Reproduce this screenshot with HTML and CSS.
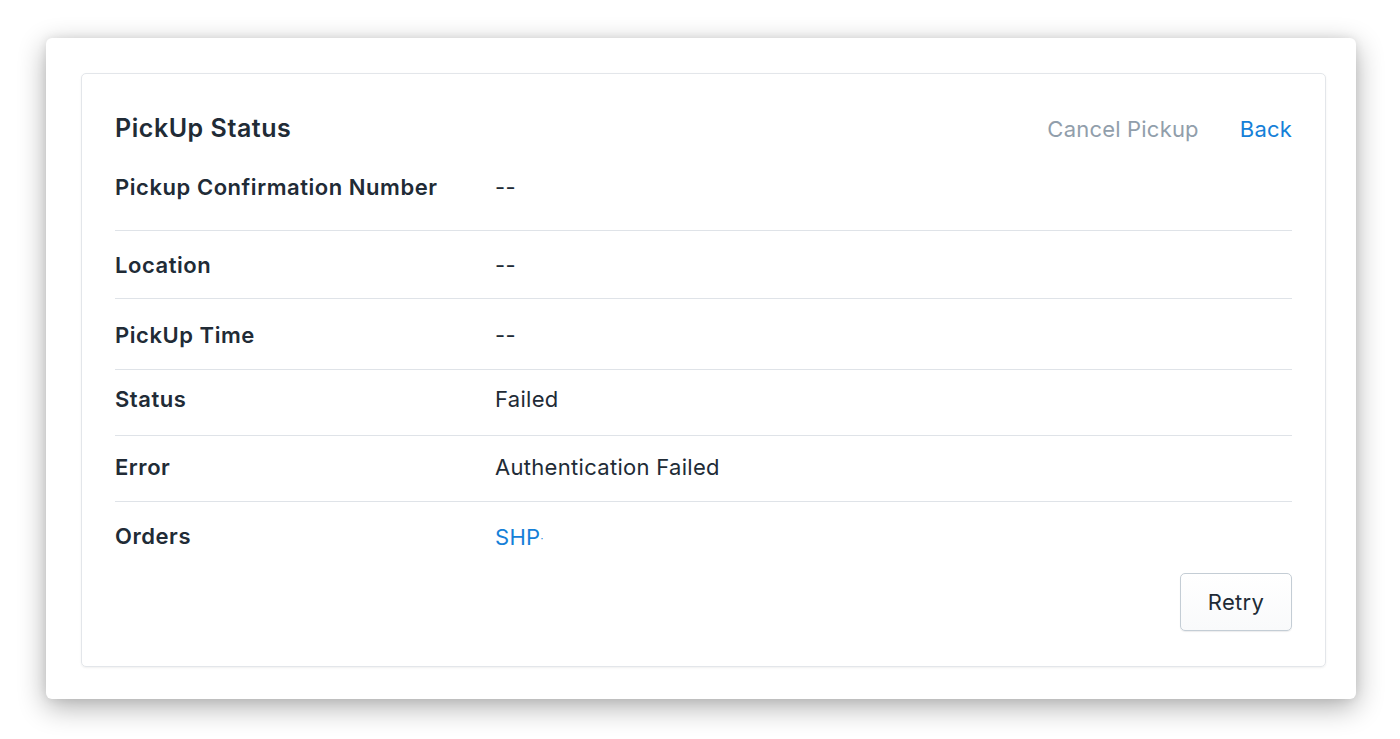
FILE: index.html
```html
<!DOCTYPE html>
<html>
<head>
<meta charset="utf-8">
<link rel="stylesheet" href="styles.css">
</head>
<body>
<div class="page">
  <div class="window">
    <div class="card">
      <div class="header">
        <h2 class="title">PickUp Status</h2>
        <div class="actions">
          <span class="link muted">Cancel Pickup</span>
          <span class="link">Back</span>
        </div>
      </div>
      <div class="rows">
        <div class="row r1"><div class="label">Pickup Confirmation Number</div><div class="value">--</div></div>
        <div class="row r2"><div class="label">Location</div><div class="value">--</div></div>
        <div class="row r3"><div class="label">PickUp Time</div><div class="value">--</div></div>
        <div class="row r4"><div class="label">Status</div><div class="value">Failed</div></div>
        <div class="row r5"><div class="label">Error</div><div class="value">Authentication Failed</div></div>
        <div class="row r6"><div class="label">Orders</div><div class="value"><span class="order">SHP<span class="dot">·</span></span></div></div>
      </div>
      <div class="footer">
        <button class="btn">Retry</button>
      </div>
    </div>
  </div>
</div>
</body>
</html>
```
FILE: styles.css
```css
* { box-sizing: border-box; }
html, body { margin: 0; padding: 0; background: #ffffff; }
body {
  font-family: Inter, "Noto Sans", "Liberation Sans", sans-serif;
  color: #212b36;
  width: 1400px;
  height: 739px;
  overflow: hidden;
}
.page {
  padding: 38px 44px 40px 46px;
}
.window {
  width: 1310px;
  height: 661px;
  background: #ffffff;
  border-radius: 6px;
  box-shadow: 0 8px 28px rgba(0, 0, 0, 0.32), 0 0 10px rgba(0, 0, 0, 0.08);
  padding: 35px 30px 33px 35px;
}
.card {
  border: 1px solid #e3e6ea;
  border-radius: 5px;
  height: 594px;
  padding: 33px 33px 33px 33px;
  box-shadow: 0 1px 2px rgba(63, 63, 68, 0.08);
}
.header {
  display: flex;
  justify-content: space-between;
  align-items: center;
  height: 42px;
}
.title {
  margin: 0;
  font-size: 25px;
  font-weight: 600;
  line-height: 42px;
  letter-spacing: 0.55px;
}
.actions {
  display: flex;
  gap: 41px;
  font-size: 22px;
  line-height: 42px;
  padding-top: 2px;
  letter-spacing: 0.2px;
}
.link { color: #1580d8; }
.link.muted { color: #919eab; }
.rows { display: flex; flex-direction: column; }
.row {
  display: flex;
  font-size: 22px;
  line-height: 28px;
}
.row + .row { border-top: 1px solid #dfe3e8; }
.label { width: 380px; font-weight: 600; letter-spacing: 0.55px; }
.value { font-weight: 400; letter-spacing: 0.3px; }
.r1 { padding: 24px 0 29px; }
.r2 { padding: 20px 0 19px; }
.r3 { padding: 22px 0 20px; }
.r4 { padding: 15px 0 22px; }
.r5 { padding: 17px 0 20px; }
.r6 { padding: 20px 0 0; }
.r6 .value { padding-top: 1px; }
.order { color: #1580d8; }
.dot { font-size: 10px; vertical-align: 3px; }
.footer {
  display: flex;
  justify-content: flex-end;
  margin-top: 21px;
}
.btn {
  width: 112px;
  height: 58px;
  font-family: inherit;
  font-size: 22px;
  letter-spacing: 0.3px;
  color: #212b36;
  background: linear-gradient(180deg, #ffffff, #f9fafb);
  border: 1px solid #c4cdd5;
  border-radius: 5px;
  box-shadow: 0 1px 1px rgba(22, 29, 37, 0.08);
  padding: 0;
}
```
